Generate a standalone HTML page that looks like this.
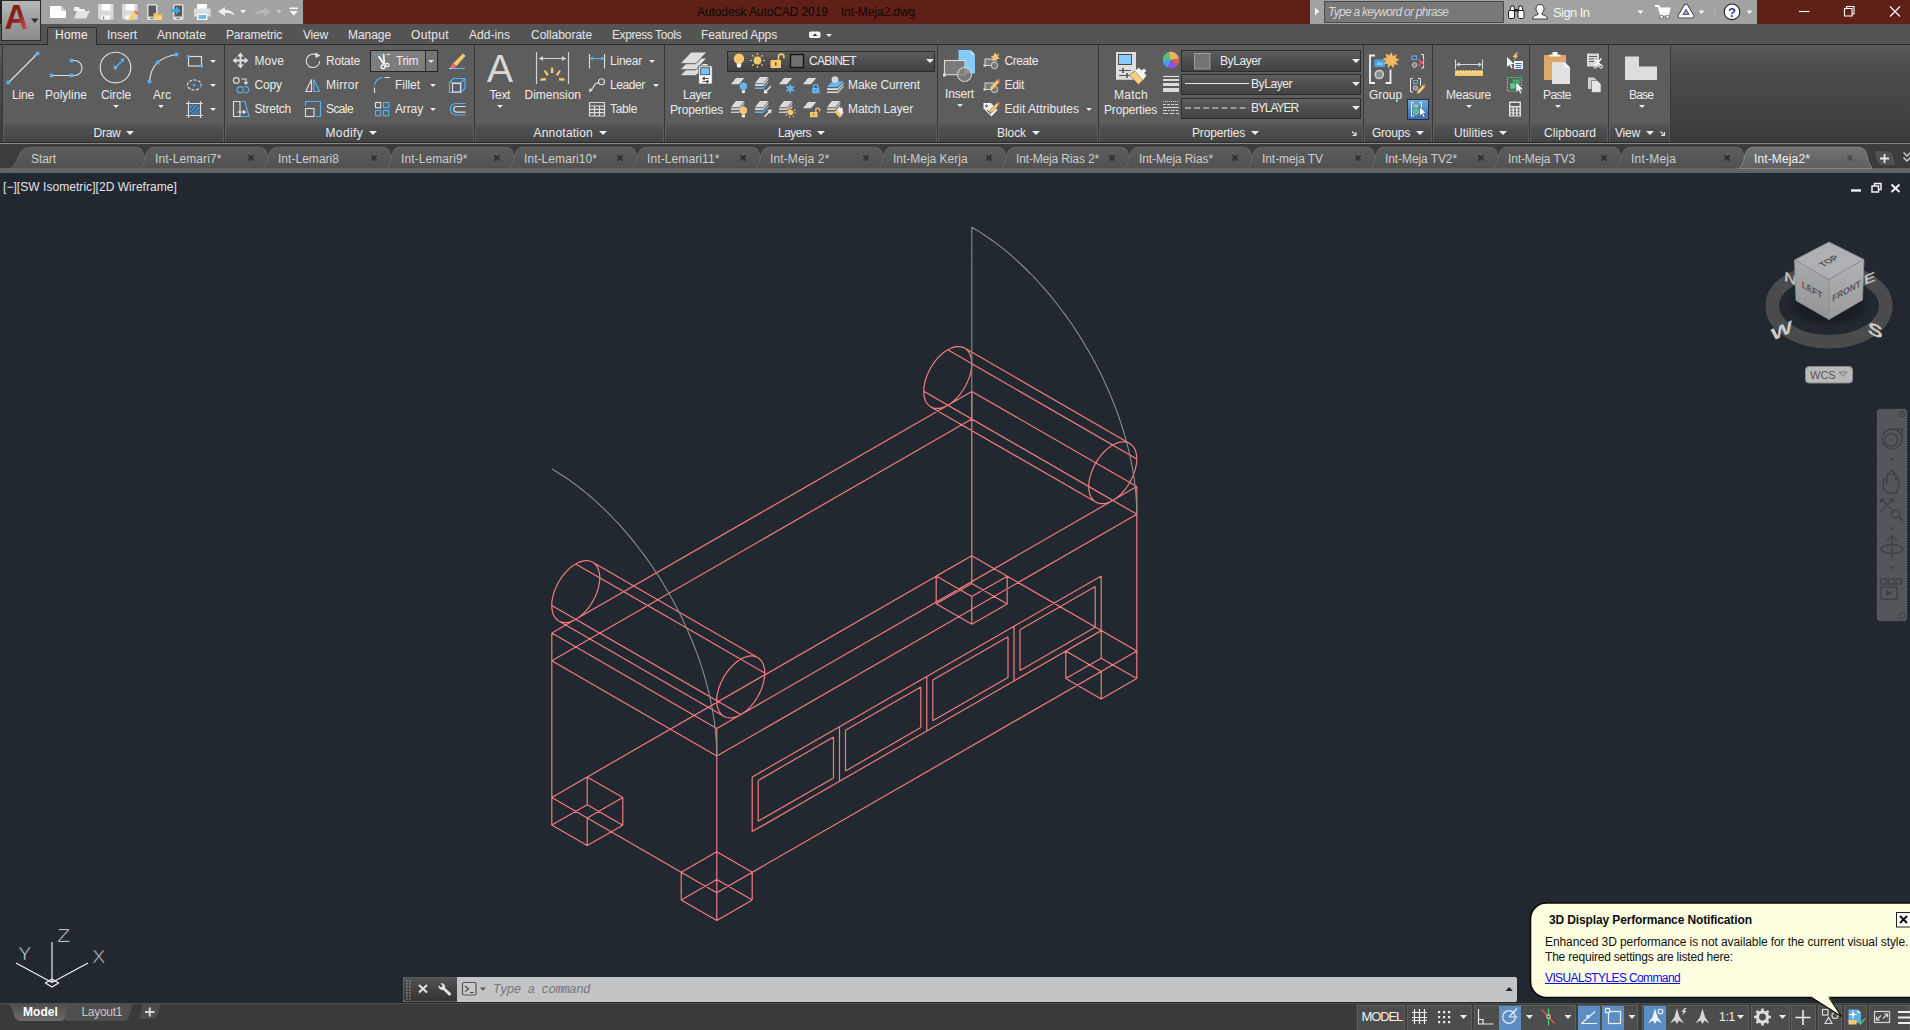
<!DOCTYPE html>
<html lang="en"><head><meta charset="utf-8"><title>Autodesk AutoCAD 2019 - Int-Meja2.dwg</title>
<style>
*{box-sizing:border-box;margin:0;padding:0}
html,body{width:1910px;height:1030px;overflow:hidden;background:#212830;font-family:"Liberation Sans",sans-serif;font-size:12px;color:#ebebeb}
.a{position:absolute}
.t{position:absolute;white-space:nowrap;line-height:14px;height:14px;letter-spacing:-0.15px}
svg{position:absolute;overflow:visible}
#title{left:0;top:0;width:1910px;height:24px;background:#5e2017}
#qat{left:41px;top:0;width:262px;height:24px;background:#a2a2a2}
#appbtn{left:1px;top:0;width:40px;height:41px;border:1px solid #2a2a2a;background:linear-gradient(#b8b8b8,#9c9ea0 50%,#8e8a8a)}
#info{left:1310px;top:0;width:447px;height:24px;background:#a2a2a2}
#tabsrow{left:0;top:24px;width:1910px;height:21px;background:#545454}
#ribbon{left:0;top:44px;width:1910px;height:99px;border-top:1px solid #2c2c2c;border-bottom:1px solid #2a2a2a;background:linear-gradient(#5a5b5d 0,#4d4e50 20%,#454648 55%,#3b3b3b 100%)}
.pt{top:123.500px;height:18px;background:linear-gradient(#585858 0,#4e4f50 25%,#4a4b4c 60%,#434343 100%)}
.lbl{color:#ebebeb}
.dd{position:absolute;width:0;height:0;border-left:4px solid transparent;border-right:4px solid transparent;border-top:4.500px solid #ececec}
.dds{position:absolute;width:0;height:0;border-left:3px solid transparent;border-right:3px solid transparent;border-top:3px solid #e8e8e8}
#filetabs{left:0;top:143px;width:1910px;height:30px;background:#3c3c3c;border-top:1px solid #888}
.ft{position:absolute;top:3px;height:22px;width:128px}
#viewport{left:0;top:173px;width:1910px;height:830px;background:#212830}
#status{left:0;top:1003px;width:1910px;height:27px;background:#3a3a3a}
</style></head><body>
<div class="a" id="title"></div><div class="a" style="left:0;top:0;width:1px;height:42px;background:#1c1c1c"></div>
<div class="a" id="qat"></div>
<div class="a" id="info"></div>
<div class="a" style="left:0;top:24px;width:1910px;height:1px;background:#2b2b2b"></div>
<div class="t" style="left:697.0px;top:5.0px;color:#100706;font-size:12px;line-height:14px;height:14px;letter-spacing:-0.09px;">Autodesk AutoCAD 2019    Int-Meja2.dwg</div>
<div class="a" style="left:1324px;top:1px;width:180px;height:22px;background:#787878;border:1px solid #4a4a4a"></div>
<div class="t" style="left:1328.0px;top:5.0px;color:#d6d6d6;font-size:12px;line-height:14px;height:14px;letter-spacing:-0.74px;font-style:italic;">Type a keyword or phrase</div>
<div class="t" style="left:1553.0px;top:4.8px;color:#eef6f6;font-size:13px;line-height:15px;height:15px;letter-spacing:-0.57px;">Sign In</div>
<svg class="a" style="left:0;top:0" width="1910" height="46" viewBox="0 0 1910 46">
<!-- QAT icons -->
<path d="M50 6h11l5 5v7h-16z" fill="#fff"/><path d="M61 6v5h5z" fill="#d0d0d0"/>
<path d="M74 7h5l1 2h5v2h-11z" fill="#f4f4f4"/><path d="M77 11h13l-4 7.5h-12z" fill="#e4e4e4"/>
<path d="M98 4h15.5v15.5h-14l-1.500-1.500z" fill="#d9d9d9"/><rect x="101.500" y="4" width="9" height="6.500" fill="#fff"/><rect x="101.500" y="15.500" width="8.500" height="4" fill="#fff"/><rect x="103" y="16.500" width="1.200" height="2.500" fill="#777"/>
<path d="M122 4h15.5v15.500h-14l-1.500-1.500z" fill="#d9d9d9"/><rect x="125.500" y="4" width="9" height="6.500" fill="#fff"/><rect x="125.500" y="15.500" width="5" height="4" fill="#fff"/><path d="M129 17.500l6-6.500 3 2.800-6 6.200-3.500 0.500z" fill="#f2cf6a"/><path d="M134 12l1.700-1.800 3 2.800-1.700 1.800z" fill="#ea6a6a"/>
<rect x="147" y="4" width="10.500" height="16" rx="1.500" fill="#dcdcdc"/><rect x="148.500" y="5.500" width="7.500" height="11" fill="#585858"/><rect x="150.500" y="17.800" width="3" height="1" fill="#555"/><path d="M153.500 13h3l1 1.200h4.500v5.800h-8.500z" fill="#f3c04f"/><path d="M153.500 20l1.500-4h7.500l-1 4z" fill="#f7d37c"/>
<rect x="173" y="4" width="10.500" height="16" rx="1.500" fill="#dcdcdc"/><rect x="174.500" y="5.500" width="7.500" height="11" fill="#585858"/><rect x="176.500" y="17.800" width="3" height="1" fill="#555"/><path d="M171 9h5v-2.500l4.500 4-4.500 4v-2.500h-5z" fill="#45a3e8"/>
<path d="M197 4h10v5h-10z" fill="#fff"/><path d="M194 8.500h16.500v8h-16.500z" fill="#dedede"/><path d="M194 12.500h16.500v1h-16.500z" fill="#c9c9c9"/><rect x="197" y="13.500" width="10.500" height="6.500" fill="#fff"/><rect x="198.500" y="15" width="7.500" height="4" fill="#6dbaf0"/>
<path d="M218 11.500l7-4.500v3c5 0 8.500 1.500 9.500 6c-2-2.500-5-3-9.500-3v3z" fill="#ececec"/>
<path d="M240.200 10h6l-3 3.500z" fill="#f2f2f2"/>
<path d="M271 11.500l-7-4.500v3c-5 0-8.500 1.500-9.500 6c2-2.500 5-3 9.500-3v3z" fill="#b9b9b9"/>
<path d="M276 10h6l-3 3.500z" fill="#c4c4c4"/>
<rect x="289.500" y="7.500" width="8.500" height="1.600" fill="#f4f4f4"/><path d="M289.500 11h8.500l-4.250 4.500z" fill="#f4f4f4"/>
<!-- info center -->
<path d="M1315 7.500l4.500 4-4.500 4z" fill="#f2f2f2"/>
<g fill="#fff" stroke="#222" stroke-width="1"><rect x="1508.500" y="10.500" width="6" height="8" rx="1.500"/><rect x="1518" y="10.500" width="6" height="8" rx="1.500"/><path d="M1510 10.500l1-4.500h3l0.500 4.500z"/><path d="M1518.500 10.500l.5-4.500h3l1 4.500z"/></g><rect x="1514" y="9" width="4.500" height="2.500" fill="#222"/>
<g><path d="M1532.500 19c0-3 2.500-3.500 5.500-4.500v-1.500c-1.500-1-2-2.500-2-4.500c0-2.500 1.500-4 4-4s4 1.500 4 4c0 2-.5 3.500-2 4.500v1.500c3 1 5.500 1.500 5.500 4.500z" fill="#f6f6f6" stroke="#333" stroke-width="0.900"/></g>
<path d="M1637.500 10.500h6l-3 3.500z" fill="#f4f4f4"/>
<g fill="none" stroke="#fff" stroke-width="2"><path d="M1655 6h3.500l2.500 8.500h7l1.500-6h-10"/></g><path d="M1660 8.500h9l-1.500 5h-6z" fill="#fff"/><circle cx="1661.500" cy="17" r="1.700" fill="#fff" stroke="#333" stroke-width=".6"/><circle cx="1667.500" cy="17" r="1.700" fill="#fff" stroke="#333" stroke-width=".6"/>
<g><path d="M1686 6l-6 10h12z" fill="none" stroke="#333" stroke-width="4.600" stroke-linejoin="round"/><path d="M1686 6l-6 10h12z" fill="none" stroke="#fff" stroke-width="3" stroke-linejoin="round"/><path d="M1686 9.500l-3 5h6z" fill="#a2a2a2" stroke="#3c49a0" stroke-width=".8"/></g>
<path d="M1698.500 10.500h6l-3 3.500z" fill="#f4f4f4"/>
<path d="M1714.500 4v16" stroke="#b8b8b8" stroke-width="1" stroke-dasharray="1 1"/>
<circle cx="1732" cy="11.800" r="7.800" fill="#fff" stroke="#222" stroke-width="1.100"/>
<text x="1732" y="16.500" font-family="Liberation Sans,sans-serif" font-weight="bold" font-size="13" fill="#2f3a9a" text-anchor="middle">?</text>
<path d="M1746.500 10.500h6l-3 3.500z" fill="#f4f4f4"/>
<!-- window controls -->
<g stroke="#fff" stroke-width="1.100" fill="none"><path d="M1799 11.500h10.500"/><path d="M1844.500 8.500h7.500v7.500h-7.500z"/><path d="M1846.500 8.500v-2h7.500v7.500h-2"/><path d="M1890 6.500l10 10M1900 6.500l-10 10"/></g>
</svg>
<div class="a" id="tabsrow"></div>
<div class="a" id="ribbon"></div>
<div class="a" style="left:47px;top:27px;width:50px;height:18px;background:#5b5b5b;border:1px solid #2e2e2e;border-bottom:none;border-radius:2px 2px 0 0"></div>
<div class="a" id="appbtn"></div>
<svg class="a" style="left:0;top:0" width="42" height="42" viewBox="0 0 42 42"><defs><linearGradient id="alogo" x1="0" y1="0" x2="1" y2="1"><stop offset="0" stop-color="#6a1411"/><stop offset=".55" stop-color="#8e2420"/><stop offset="1" stop-color="#d86a6a"/></linearGradient></defs><text x="16.500" y="29" text-anchor="middle" font-family="Liberation Sans,sans-serif" font-weight="bold" font-size="36" fill="url(#alogo)" transform="translate(16.500 0) scale(.92 1) translate(-16.500 0)">A</text><path d="M31 18.500h7.500l-3.750 4.500z" fill="#2a2a2a"/></svg>
<div class="t" style="left:55.0px;top:28.0px;color:#f2f2f2;font-size:12px;line-height:14px;height:14px;letter-spacing:0.25px;">Home</div>
<div class="t" style="left:107.0px;top:28.0px;color:#e6e6e6;font-size:12px;line-height:14px;height:14px;letter-spacing:-0.00px;">Insert</div>
<div class="t" style="left:157.0px;top:28.0px;color:#e6e6e6;font-size:12px;line-height:14px;height:14px;letter-spacing:0.12px;">Annotate</div>
<div class="t" style="left:226.0px;top:28.0px;color:#e6e6e6;font-size:12px;line-height:14px;height:14px;letter-spacing:-0.20px;">Parametric</div>
<div class="t" style="left:303.0px;top:28.0px;color:#e6e6e6;font-size:12px;line-height:14px;height:14px;letter-spacing:-0.20px;">View</div>
<div class="t" style="left:348.0px;top:28.0px;color:#e6e6e6;font-size:12px;line-height:14px;height:14px;letter-spacing:-0.06px;">Manage</div>
<div class="t" style="left:411.0px;top:28.0px;color:#e6e6e6;font-size:12px;line-height:14px;height:14px;letter-spacing:0.33px;">Output</div>
<div class="t" style="left:469.0px;top:28.0px;color:#e6e6e6;font-size:12px;line-height:14px;height:14px;letter-spacing:0.04px;">Add-ins</div>
<div class="t" style="left:531.0px;top:28.0px;color:#e6e6e6;font-size:12px;line-height:14px;height:14px;letter-spacing:-0.03px;">Collaborate</div>
<div class="t" style="left:612.0px;top:28.0px;color:#e6e6e6;font-size:12px;line-height:14px;height:14px;letter-spacing:-0.42px;">Express Tools</div>
<div class="t" style="left:701.0px;top:28.0px;color:#e6e6e6;font-size:12px;line-height:14px;height:14px;letter-spacing:-0.16px;">Featured Apps</div>
<div class="a" style="left:2px;top:45px;width:1669px;height:97px;background:#5d5d5d"></div>
<div class="a pt" style="left:4px;width:219px"></div>
<div class="t" style="left:93.5px;top:125.6px;color:#ebebeb;font-size:12px;line-height:14px;height:14px;letter-spacing:-0.25px;">Draw</div>
<div class="dd" style="left:126.0px;top:130.800px"></div>
<div class="a pt" style="left:226px;width:247px"></div>
<div class="t" style="left:325.5px;top:125.6px;color:#ebebeb;font-size:12px;line-height:14px;height:14px;letter-spacing:0.36px;">Modify</div>
<div class="dd" style="left:369.0px;top:130.800px"></div>
<div class="a pt" style="left:476px;width:187px"></div>
<div class="t" style="left:533.5px;top:125.6px;color:#ebebeb;font-size:12px;line-height:14px;height:14px;letter-spacing:0.21px;">Annotation</div>
<div class="dd" style="left:599.0px;top:130.800px"></div>
<div class="a pt" style="left:666px;width:270px"></div>
<div class="t" style="left:778.0px;top:125.6px;color:#ebebeb;font-size:12px;line-height:14px;height:14px;letter-spacing:-0.51px;">Layers</div>
<div class="dd" style="left:817.0px;top:130.800px"></div>
<div class="a pt" style="left:939px;width:158px"></div>
<div class="t" style="left:997.0px;top:125.6px;color:#ebebeb;font-size:12px;line-height:14px;height:14px;letter-spacing:-0.07px;">Block</div>
<div class="dd" style="left:1032.0px;top:130.800px"></div>
<div class="a pt" style="left:1100px;width:262px"></div>
<div class="t" style="left:1192.0px;top:125.6px;color:#ebebeb;font-size:12px;line-height:14px;height:14px;letter-spacing:-0.17px;">Properties</div>
<div class="dd" style="left:1251.0px;top:130.800px"></div>
<div class="a pt" style="left:1365px;width:66px"></div>
<div class="t" style="left:1372.0px;top:125.6px;color:#ebebeb;font-size:12px;line-height:14px;height:14px;letter-spacing:-0.23px;">Groups</div>
<div class="dd" style="left:1416.0px;top:130.800px"></div>
<div class="a pt" style="left:1434px;width:94px"></div>
<div class="t" style="left:1454.0px;top:125.6px;color:#ebebeb;font-size:12px;line-height:14px;height:14px;letter-spacing:0.04px;">Utilities</div>
<div class="dd" style="left:1499.0px;top:130.800px"></div>
<div class="a pt" style="left:1531px;width:76px"></div>
<div class="t" style="left:1544.0px;top:125.6px;color:#ebebeb;font-size:12px;line-height:14px;height:14px;letter-spacing:0.07px;">Clipboard</div>
<div class="a pt" style="left:1610px;width:59px"></div>
<div class="t" style="left:1615.0px;top:125.6px;color:#ebebeb;font-size:12px;line-height:14px;height:14px;letter-spacing:-0.20px;">View</div>
<div class="dd" style="left:1645.5px;top:130.800px"></div>
<div class="a" style="left:2px;top:45px;width:1px;height:97px;background:#38383b"></div>
<div class="a" style="left:224px;top:45px;width:1px;height:97px;background:#38383b"></div>
<div class="a" style="left:474px;top:45px;width:1px;height:97px;background:#38383b"></div>
<div class="a" style="left:664px;top:45px;width:1px;height:97px;background:#38383b"></div>
<div class="a" style="left:937px;top:45px;width:1px;height:97px;background:#38383b"></div>
<div class="a" style="left:1098px;top:45px;width:1px;height:97px;background:#38383b"></div>
<div class="a" style="left:1363px;top:45px;width:1px;height:97px;background:#38383b"></div>
<div class="a" style="left:1432px;top:45px;width:1px;height:97px;background:#38383b"></div>
<div class="a" style="left:1529px;top:45px;width:1px;height:97px;background:#38383b"></div>
<div class="a" style="left:1608px;top:45px;width:1px;height:97px;background:#38383b"></div>
<div class="a" style="left:1670px;top:45px;width:1px;height:97px;background:#38383b"></div>
<div class="a" style="left:727px;top:50.5px;width:208px;height:21px;border:1px solid #2c2c2c;background:linear-gradient(#5e5e5e,#4e4e4e 50%,#424242)"></div>
<div class="a" style="left:1181px;top:50px;width:180px;height:21.5px;border:1px solid #2c2c2c;background:linear-gradient(#5e5e5e,#4e4e4e 50%,#424242)"></div>
<div class="a" style="left:1181px;top:73.5px;width:180px;height:21px;border:1px solid #2c2c2c;background:linear-gradient(#5e5e5e,#4e4e4e 50%,#424242)"></div>
<div class="a" style="left:1181px;top:97.5px;width:180px;height:21.5px;border:1px solid #2c2c2c;background:linear-gradient(#5e5e5e,#4e4e4e 50%,#424242)"></div>
<div class="t" style="left:1220.0px;top:53.8px;color:#ebebeb;font-size:12px;line-height:14px;height:14px;letter-spacing:-0.43px;">ByLayer</div>
<div class="t" style="left:1251.0px;top:77.0px;color:#ebebeb;font-size:12px;line-height:14px;height:14px;letter-spacing:-0.43px;">ByLayer</div>
<div class="t" style="left:1251.0px;top:101.0px;color:#ebebeb;font-size:12px;line-height:14px;height:14px;letter-spacing:-1.07px;">BYLAYER</div>
<div class="a" style="left:370px;top:50px;width:68px;height:22px;border:1px solid #262626;background:#7d7d7d"></div><div class="a" style="left:425px;top:51px;width:1px;height:20px;background:#2a2a2a"></div><div class="a" style="left:426px;top:51px;width:11px;height:20px;background:#747474"></div>
<div class="a" style="left:1407px;top:99px;width:22px;height:21px;background:linear-gradient(#6fa6dc,#3d6db8);border:1px solid #20324f"></div>
<div class="t" style="left:12.0px;top:87.5px;color:#ebebeb;font-size:12px;line-height:14px;height:14px;letter-spacing:-0.17px;">Line</div>
<div class="t" style="left:45.0px;top:87.5px;color:#ebebeb;font-size:12px;line-height:14px;height:14px;letter-spacing:-0.00px;">Polyline</div>
<div class="t" style="left:101.0px;top:87.5px;color:#ebebeb;font-size:12px;line-height:14px;height:14px;letter-spacing:-0.11px;">Circle</div>
<div class="t" style="left:153.0px;top:87.5px;color:#ebebeb;font-size:12px;line-height:14px;height:14px;letter-spacing:0.00px;">Arc</div>
<div class="t" style="left:254.5px;top:53.8px;color:#ebebeb;font-size:12px;line-height:14px;height:14px;letter-spacing:0.04px;">Move</div>
<div class="t" style="left:254.5px;top:78.0px;color:#ebebeb;font-size:12px;line-height:14px;height:14px;letter-spacing:-0.13px;">Copy</div>
<div class="t" style="left:254.5px;top:102.0px;color:#ebebeb;font-size:12px;line-height:14px;height:14px;letter-spacing:-0.22px;">Stretch</div>
<div class="t" style="left:326.0px;top:53.8px;color:#ebebeb;font-size:12px;line-height:14px;height:14px;letter-spacing:-0.23px;">Rotate</div>
<div class="t" style="left:326.0px;top:78.0px;color:#ebebeb;font-size:12px;line-height:14px;height:14px;letter-spacing:0.28px;">Mirror</div>
<div class="t" style="left:326.0px;top:102.0px;color:#ebebeb;font-size:12px;line-height:14px;height:14px;letter-spacing:-0.61px;">Scale</div>
<div class="t" style="left:396.0px;top:53.8px;color:#ebebeb;font-size:12px;line-height:14px;height:14px;letter-spacing:-0.39px;">Trim</div>
<div class="t" style="left:395.0px;top:78.0px;color:#ebebeb;font-size:12px;line-height:14px;height:14px;letter-spacing:-0.06px;">Fillet</div>
<div class="t" style="left:395.0px;top:102.0px;color:#ebebeb;font-size:12px;line-height:14px;height:14px;letter-spacing:-0.13px;">Array</div>
<div class="t" style="left:489.5px;top:87.5px;color:#ebebeb;font-size:12px;line-height:14px;height:14px;letter-spacing:-0.38px;">Text</div>
<div class="t" style="left:524.5px;top:87.5px;color:#ebebeb;font-size:12px;line-height:14px;height:14px;letter-spacing:-0.02px;">Dimension</div>
<div class="t" style="left:610.0px;top:53.8px;color:#ebebeb;font-size:12px;line-height:14px;height:14px;letter-spacing:-0.23px;">Linear</div>
<div class="t" style="left:610.0px;top:78.0px;color:#ebebeb;font-size:12px;line-height:14px;height:14px;letter-spacing:-0.40px;">Leader</div>
<div class="t" style="left:610.0px;top:102.0px;color:#ebebeb;font-size:12px;line-height:14px;height:14px;letter-spacing:-0.34px;">Table</div>
<div class="t" style="left:683.0px;top:87.5px;color:#ebebeb;font-size:12px;line-height:14px;height:14px;letter-spacing:-0.41px;">Layer</div>
<div class="t" style="left:670.0px;top:102.5px;color:#ebebeb;font-size:12px;line-height:14px;height:14px;letter-spacing:-0.17px;">Properties</div>
<div class="t" style="left:809.0px;top:53.8px;color:#ebebeb;font-size:12px;line-height:14px;height:14px;letter-spacing:-0.72px;">CABINET</div>
<div class="t" style="left:848.0px;top:78.0px;color:#ebebeb;font-size:12px;line-height:14px;height:14px;letter-spacing:-0.06px;">Make Current</div>
<div class="t" style="left:848.0px;top:102.0px;color:#ebebeb;font-size:12px;line-height:14px;height:14px;letter-spacing:-0.09px;">Match Layer</div>
<div class="t" style="left:945.0px;top:87.0px;color:#ebebeb;font-size:12px;line-height:14px;height:14px;letter-spacing:-0.17px;">Insert</div>
<div class="t" style="left:1004.5px;top:53.8px;color:#ebebeb;font-size:12px;line-height:14px;height:14px;letter-spacing:-0.42px;">Create</div>
<div class="t" style="left:1004.5px;top:78.0px;color:#ebebeb;font-size:12px;line-height:14px;height:14px;letter-spacing:-0.30px;">Edit</div>
<div class="t" style="left:1004.5px;top:102.0px;color:#ebebeb;font-size:12px;line-height:14px;height:14px;letter-spacing:0.03px;">Edit Attributes</div>
<div class="t" style="left:1114.0px;top:87.5px;color:#ebebeb;font-size:12px;line-height:14px;height:14px;letter-spacing:0.26px;">Match</div>
<div class="t" style="left:1104.0px;top:102.5px;color:#ebebeb;font-size:12px;line-height:14px;height:14px;letter-spacing:-0.17px;">Properties</div>
<div class="t" style="left:1369.0px;top:87.5px;color:#ebebeb;font-size:12px;line-height:14px;height:14px;letter-spacing:-0.07px;">Group</div>
<div class="t" style="left:1446.0px;top:87.5px;color:#ebebeb;font-size:12px;line-height:14px;height:14px;letter-spacing:-0.24px;">Measure</div>
<div class="t" style="left:1543.0px;top:87.5px;color:#ebebeb;font-size:12px;line-height:14px;height:14px;letter-spacing:-0.54px;">Paste</div>
<div class="t" style="left:1629.0px;top:87.5px;color:#ebebeb;font-size:12px;line-height:14px;height:14px;letter-spacing:-0.84px;">Base</div>
<div class="dds" style="left:112.5px;top:104.5px"></div>
<div class="dds" style="left:158.0px;top:104.5px"></div>
<div class="dds" style="left:496.5px;top:104.5px"></div>
<div class="dds" style="left:956.5px;top:104.0px"></div>
<div class="dds" style="left:1465.5px;top:105.0px"></div>
<div class="dds" style="left:1554.5px;top:105.0px"></div>
<div class="dds" style="left:1638.5px;top:105.0px"></div>
<div class="dds" style="left:209.5px;top:59.5px"></div>
<div class="dds" style="left:209.5px;top:83.5px"></div>
<div class="dds" style="left:209.5px;top:107.5px"></div>
<div class="dds" style="left:428.0px;top:59.5px"></div>
<div class="dds" style="left:430.0px;top:83.5px"></div>
<div class="dds" style="left:430.0px;top:107.5px"></div>
<div class="dds" style="left:649.0px;top:59.5px"></div>
<div class="dds" style="left:652.5px;top:83.5px"></div>
<div class="dds" style="left:1086.0px;top:107.5px"></div>
<div class="dds" style="left:826.0px;top:33.5px"></div>
<div class="dd" style="left:925.5px;top:59.0px"></div>
<div class="dd" style="left:1351.5px;top:59.0px"></div>
<div class="dd" style="left:1351.5px;top:82.0px"></div>
<div class="dd" style="left:1351.5px;top:106.0px"></div>
<svg class="a" style="left:0;top:0" width="1910" height="146" viewBox="0 0 1910 146">

<g fill="none" stroke="#dedede" stroke-width="1.150">
<!-- Draw -->
<path d="M8.500 82.500L37.500 53.500"/>
<path d="M51.500 75.500H74.500A7.500 7.500 0 0 0 74.500 60.500H72"/>
<circle cx="115.500" cy="67.500" r="15.300"/>
<path d="M149.500 81.500C150.500 66 160 57 176.500 54.500"/>
<rect x="188.500" y="56.500" width="13" height="9.500"/>
<path d="M200.500 82.500A7 5 0 1 0 200.500 87.500" stroke-dasharray="3 1.500"/>
<path d="M186 103.500h17M186 115.500h17M188.500 101v17M200.500 101v17"/>
<!-- Modify -->
<path d="M235 60.500H246M240.500 55V66" stroke-width="1.900"/>
<circle cx="236.300" cy="80.500" r="2.900"/>
<path d="M241.500 79h4.500v3.500"/>
<path d="M233.500 101.500h6.500v15h-6.500z"/>
<path d="M237.500 112h7"/>
<path d="M317.200 55.600A6.700 6.700 0 1 0 319.700 61"/>
<path d="M311.500 79.500L305.800 91.500H311.500z"/>
<rect x="305.500" y="108.500" width="8.500" height="8"/>
<path d="M384.500 77.500h5.500M374.500 87.500v5.500"/>
<rect x="375.500" y="102.500" width="5.200" height="5.200"/>
<path d="M386.500 54.500h3.800"/>
<!-- Annotation -->
<path d="M536.500 52v32M568.500 52v32M539 58.500h27" stroke="#d4d4d4"/>
<path d="M589.500 54v14.500M604.500 54v14.500"/>
<circle cx="601.500" cy="81.700" r="3"/>
<path d="M598.500 82.500l-3 1.200l-5 7.500"/>
<path d="M589.500 102.500h15v13.500h-15zM589.500 106h15M589.500 109.300h15M589.500 112.600h15M594.500 106v10M599.500 106v10"/>
</g>
<!-- arrowheads etc (filled light) -->
<g fill="#dedede">
<path d="M232.500 60.500l4-3.300v6.600zM248.500 60.500l-4-3.300v6.600zM240.500 52.500l-3.300 4h6.600zM240.500 68.500l-3.300-4h6.600z"/>
<path d="M246 85l-2.500-3h5z"/>
<path d="M246.500 112l-3.500-2.600v5.200z"/>
<path d="M320.500 55.500l-5.500-3.300l.7 5.800z"/>
<path d="M539 58.500l4-2.500v5zM566 58.500l-4-2.500v5z" fill="#d4d4d4"/>
<path d="M588.800 92.500l1-4.500l3 2.300z"/>
</g>
<!-- blue parts -->
<g fill="none" stroke="#55b1f2" stroke-width="1.150">
<path d="M116 67l7.500-7.500"/>
<circle cx="240.200" cy="89.700" r="3.100"/><path d="M244.300 87a3.100 3.100 0 1 1 0 5.400"/>
<path d="M241.500 101.500h3.500l4 15h-8.500"/>
<path d="M313.800 79.500L319.500 91.500H313.800z"/>
<path d="M305.500 106v-4.500h15v15h-4.500"/>
<path d="M374 54.500h8" stroke-dasharray="2 1"/>
<path d="M374.500 85.500A8.500 8.500 0 0 1 382.500 77.500"/>
<rect x="383.500" y="102.500" width="5.200" height="5.200"/><rect x="375.500" y="110.500" width="5.200" height="5.200"/><rect x="383.500" y="110.500" width="5.200" height="5.200"/>
<path d="M452 68.500h13"/>
<path d="M449.500 82.500l4-4h11.500v9.500l-4 4.500M465 78.500l-4 4M449.500 82.500h11.500v10h-11.500z"/>
<path d="M465.500 103.500h-9.500a5.700 5.700 0 0 0 0 11.500h9.500"/>
<path d="M591 58.500h12"/>
</g>
<path d="M124.500 58l-4.500 1.200l3.300 3.300z" fill="#55b1f2"/>
<path d="M589.800 58.500l3-2v4zM604.200 58.500l-3-2v4z" fill="#55b1f2"/>
<g stroke="#dedede" stroke-width="1.150" fill="none"><rect x="452.500" y="83.500" width="8" height="8.500"/><path d="M465.500 106.500h-9a2.800 2.800 0 0 0 0 5.600h9"/></g>
<!-- hatch fill -->
<rect x="189.500" y="104.500" width="10" height="10" fill="#3a6890"/><path d="M190 112l7-7M192 114.500l7.500-7.500M190 108l3.500-3.500M196 114.500l3.500-3.500" stroke="#62aee6" stroke-width=".9"/>
<!-- blue grips -->
<rect x="6.7" y="80.7" width="3.600" height="3.600" fill="#55b1f2"/><rect x="35.7" y="51.7" width="3.600" height="3.600" fill="#55b1f2"/>
<rect x="49.7" y="73.7" width="3.600" height="3.600" fill="#55b1f2"/><rect x="69.7" y="73.7" width="3.600" height="3.600" fill="#55b1f2"/><rect x="69.7" y="58.7" width="3.600" height="3.600" fill="#55b1f2"/>
<rect x="113.7" y="65.7" width="3.600" height="3.600" fill="#55b1f2"/>
<rect x="147.7" y="79.7" width="3.600" height="3.600" fill="#55b1f2"/><rect x="155.7" y="60.7" width="3.600" height="3.600" fill="#55b1f2"/><rect x="174.7" y="52.7" width="3.600" height="3.600" fill="#55b1f2"/>
<rect x="187.200" y="55.200" width="2.500" height="2.500" fill="#55b1f2"/><rect x="200.500" y="65" width="2.500" height="2.500" fill="#55b1f2"/>
<rect x="193" y="84" width="2.200" height="2.200" fill="#55b1f2"/><rect x="193" y="78.800" width="2.200" height="2.200" fill="#55b1f2"/><rect x="200" y="84" width="2.200" height="2.200" fill="#55b1f2"/>
<!-- trim scissors -->
<path d="M377.800 56.500l2-.8l4.800 7.800l-1.500 1.200z" fill="#f6f6f6"/><path d="M382.800 53.800h1.600l.8 9l-1.800 1z" fill="#f6f6f6"/>
<g stroke="#f6f6f6" stroke-width="1.300" fill="none"><circle cx="383" cy="66.700" r="1.900"/><circle cx="387.300" cy="65" r="1.700"/><path d="M384.500 63.500l2 .5"/></g>
<!-- erase -->
<path d="M463 53.500l2.500 2.500l-9 10l-3.500-2.500z" fill="#f6c76e"/><path d="M453 63.500l3.500 2.500l-2 2.200l-3.300-.2l-.5-2z" fill="#ee6b6b"/><path d="M449 68.500h3" stroke="#dedede"/>
<!-- big A and dimension burst -->
<text x="500" y="82" font-family="Liberation Sans,sans-serif" font-size="39.500" fill="#d8d8d8" text-anchor="middle">A</text>
<g fill="#f6c76e"><path d="M551.200 67.500h1.800l.5 5.500h-2.800z"/><path d="M543.800 71l1.400-1l3.600 4.500l-2 1.400z"/><path d="M560.800 71l-1.400-1l-3.600 4.500l2 1.400z"/><path d="M540.500 78.500l5.500-.5v2.400l-5.500.3z"/><path d="M564.500 78.500l-5.500-.5v2.400l5.500.3z"/></g>
<!-- Layer properties big -->
<g stroke="#5d5d5d" stroke-width="1"><path d="M691.200 64h15.800l-11.100 11.800h-16z" fill="#dcdcdc"/><path d="M691.200 58h15.800l-11.100 11.800h-16z" fill="#dcdcdc"/><path d="M691.200 52h15.800l-11.100 11.700h-16z" fill="#dedede"/></g>
<rect x="703" y="64" width="4.500" height="2" fill="#f4f4f4"/>
<rect x="698.700" y="65.900" width="13.500" height="18.100" fill="#f8f8f8" stroke="#5d5d5d" stroke-width=".8"/>
<rect x="700.700" y="67.700" width="9" height="7" fill="#76c3f7" stroke="#4a4a4a" stroke-width=".9"/>
<path d="M702.800 78.500h6M702.500 78.500l1.800-1.500v3zM702.500 81.500h6M708.800 81.500l-1.800-1.500v3z" stroke="#555" stroke-width="1" fill="#555"/>
<!-- layer combo icons -->
<circle cx="739" cy="58.800" r="5.200" fill="#f6c76e"/><path d="M736.800 63.500h4.400v2.500a2.200 1.800 0 0 1-4.400 0z" fill="#f4f4f4"/>
<circle cx="757.500" cy="60.500" r="3.900" fill="#f6c76e"/><g stroke="#f6c76e" stroke-width="1.200"><path d="M757.500 53v2M757.500 66v2M750 60.500h2M763 60.500h2M752.200 55.200l1.400 1.400M761.400 64.400l1.400 1.400M752.200 65.800l1.400-1.400M761.400 56.600l1.400-1.400"/></g>
<rect x="770.500" y="60" width="10.500" height="8" fill="#f6c76e"/><path d="M778.500 60v-3.200a2.700 2.700 0 0 1 5.400 0v1.700" fill="none" stroke="#f6c76e" stroke-width="1.600"/><rect x="775" y="62.500" width="1.500" height="3" fill="#5d4a1e"/>
<rect x="790.500" y="54.500" width="13" height="13" fill="#707070" stroke="#141414" stroke-width="1.400"/>
<!-- layer rows -->
<path d="M736.0 78.0h8.300l-5.300 6.200h-8z" fill="#dcdcdc"/><circle cx="743.400" cy="86.300" r="3.700" fill="#62b8f4"/><path d="M741.800 90.300h3.200v1.700a1.600 1.300 0 0 1-3.200 0z" fill="#f2f2f2"/>
<path d="M760.0 77.0h8.300l-5.300 6.200h-8z" fill="#dcdcdc"/><path d="M755.0 84.2h8l5.300-6.200v1.700l-5.300 6.200h-8z" fill="#e2e2e2"/><path d="M755.0 87.4h8l5.300-6.200v1.700l-5.300 6.200h-8z" fill="#62b8f4"/><path d="M770.800 86.200l-5.300 5.600" stroke="#ececec" stroke-width="1.300"/><path d="M763.800 93.500l.5-4.300l3.800 3.700z" fill="#ececec"/>
<path d="M784.0 78.0h8.300l-5.300 6.200h-8z" fill="#dcdcdc"/><g stroke="#62b8f4" stroke-width="1.300"><path d="M790.300 84v9.400M786.200 86.400l8.200 4.700M786.200 91.100l8.200-4.700"/></g><circle cx="790.300" cy="88.700" r="2.300" fill="none" stroke="#62b8f4" stroke-width="1"/>
<path d="M808.0 78.0h8.300l-5.300 6.200h-8z" fill="#dcdcdc"/><rect x="812.200" y="88" width="7.200" height="5.300" fill="#62b8f4"/><path d="M813.700 88v-1.600a2.100 2.100 0 0 1 4.200 0v1.600" fill="none" stroke="#62b8f4" stroke-width="1.300"/><rect x="815.300" y="89.700" width="1" height="2" fill="#3a6c96"/>
<circle cx="835" cy="79.800" r="3.300" fill="#d2d2d2"/><path d="M832.500 81.200h11l-5.500 5.800h-11z" fill="#62b8f4"/><path d="M835 78.500a3.300 3.300 0 0 0 0 0z" fill="none"/><circle cx="835" cy="79.800" r="3.300" fill="#d2d2d2"/><path d="M827 88.200h11l5.500-5.800v1.700l-5.500 5.800h-11z" fill="#e2e2e2"/><path d="M827 91.400h11l5.500-5.800v1.700l-5.500 5.800h-11z" fill="#dadada"/>
<path d="M736.0 101.0h8.300l-5.300 6.200h-8z" fill="#dcdcdc"/><path d="M731.0 108.2h8l5.300-6.200v1.700l-5.300 6.200h-8z" fill="#d2d2d2"/><path d="M731.0 111.4h8l5.300-6.200v1.700l-5.300 6.200h-8z" fill="#c8c8c8"/><circle cx="743.400" cy="110.500" r="3.700" fill="#f6c76e"/><path d="M741.800 114.600h3.200v1.700a1.600 1.300 0 0 1-3.200 0z" fill="#f2f2f2"/>
<path d="M760.0 101.0h8.300l-5.300 6.200h-8z" fill="#dcdcdc"/><path d="M755.0 108.2h8l5.300-6.200v1.700l-5.300 6.200h-8z" fill="#e2e2e2"/><path d="M755.0 111.4h8l5.300-6.200v1.700l-5.300 6.200h-8z" fill="#62b8f4"/><path d="M764.500 116.800l5.300-5.600" stroke="#ececec" stroke-width="1.300"/><path d="M771.500 109.500l-.5 4.300l-3.800-3.700z" fill="#ececec"/>
<path d="M784.0 101.0h8.300l-5.300 6.200h-8z" fill="#dcdcdc"/><path d="M779.0 108.2h8l5.300-6.200v1.700l-5.300 6.200h-8z" fill="#d2d2d2"/><path d="M779.0 111.4h8l5.300-6.200v1.700l-5.300 6.200h-8z" fill="#c8c8c8"/><circle cx="790.500" cy="112.500" r="2.800" fill="#f6c76e"/><circle cx="790.500" cy="112.500" r="4.700" fill="none" stroke="#f6c76e" stroke-width="1.300" stroke-dasharray="1.300 2.390"/>
<path d="M808.0 102.0h8.300l-5.300 6.200h-8z" fill="#dcdcdc"/><rect x="810" y="112" width="7.500" height="5.200" fill="#f6c76e"/><path d="M815.800 112v-2a1.900 1.900 0 0 1 3.800 0v1.200" fill="none" stroke="#f6c76e" stroke-width="1.300"/><rect x="813.300" y="113.600" width="1" height="2" fill="#6a5320"/>
<path d="M832.0 101.0h8.300l-5.300 6.200h-8z" fill="#dcdcdc"/><path d="M827.0 108.2h8l5.300-6.200v1.700l-5.300 6.200h-8z" fill="#d2d2d2"/><path d="M827.0 111.4h8l5.300-6.200v1.700l-5.300 6.200h-8z" fill="#c8c8c8"/><path d="M834.500 112l2.800-2.500l5.200 5.800l-2.800 2.500z" fill="#f6c76e"/><path d="M837.300 109.500l2.500-2.300l1 1l1-.8l1.200 1.300l-.9.900l1.200 1.200l-.9.900l1.200 1.200l-2.400 2.200z" fill="#f2f2f2"/>
<!-- Block: Insert -->
<path d="M958.500 50h12l4.500 4.500v19h-16.500z" fill="#84ccf8"/><path d="M970.500 50v4.500h4.500z" fill="#b8e6e6"/>
<rect x="944.500" y="60.500" width="20.500" height="14.200" fill="#7a7a7a" stroke="#d8d8d8" stroke-width="1.100"/><rect x="943" y="73.500" width="3" height="3" fill="#dcdcdc"/>
<circle cx="964.500" cy="74.500" r="7" fill="#828282" fill-opacity=".75" stroke="#cfcfcf" stroke-width="1.100"/>
<!-- Create / Edit / Edit attr -->
<g><rect x="985" y="59" width="9" height="6.500" fill="#7a7a7a" stroke="#d8d8d8"/><rect x="983.500" y="64.500" width="2.200" height="2.200" fill="#dcdcdc"/><circle cx="994.500" cy="65.500" r="3.200" fill="#777" stroke="#cfcfcf"/><path d="M995 52l1.200 2.800l3-.8l-1.500 2.700l2.300 2l-3 .3l-.5 3l-1.800-2.500l-2.700 1.300l1-2.900l-2.500-1.700l3-.5z" fill="#f6c76e"/></g>
<g><rect x="985" y="83" width="9" height="6.500" fill="#7a7a7a" stroke="#d8d8d8"/><rect x="983.500" y="88.500" width="2.200" height="2.200" fill="#dcdcdc"/><circle cx="994.500" cy="89.500" r="3.200" fill="#777" stroke="#cfcfcf"/><path d="M990.500 87l6.500-7l2.300 2.200l-6.500 7l-2.800.6z" fill="#f6c76e"/><path d="M997 80l1.300-1.400l2.300 2.200l-1.300 1.400z" fill="#ee6b6b"/></g>
<g><path d="M983.500 103h7.500l6.500 7l-6 6.500l-8-8z" fill="#f0f0f0"/><circle cx="986.500" cy="106" r="1.200" fill="#555"/><path d="M987 110l4 4" stroke="#555"/><path d="M990 110l6.500-7l2.300 2.200l-6.500 7l-2.800.6z" fill="#f6c76e" stroke="#5d5d5d" stroke-width=".5"/><path d="M996.500 103l1.300-1.400l2.300 2.200l-1.300 1.400z" fill="#ee6b6b"/></g>
<!-- Match properties -->
<rect x="1116" y="52" width="20" height="27.800" fill="#dedede"/><rect x="1118.500" y="54.500" width="13" height="10" fill="#86cbf8" stroke="#4c4c4c" stroke-width="1"/><path d="M1119 70.500h12M1119 75.500h12" stroke="#555" stroke-width="1"/><path d="M1123 68v5M1127 73v5" stroke="#555" stroke-width="1.600"/>
<path d="M1129.500 75.300l5.500-4.500l8 9.200l-4.500 4.500z" fill="#f9cf7c" stroke="#5d5d5d" stroke-width=".6"/><path d="M1135 70.800l3.800-3l3 2.800l2.200-2.200l2.300 2.300l-2.200 2.200l2.400 2.600l-3.500 4.500z" fill="#f6f6f6"/>
<!-- color wheel -->
<g><path d="M1171 60L1162.80 60.00A8.2 8.2 0 0 1 1168.20 52.29z" fill="#4fc27a"/><path d="M1171 60L1168.20 52.29A8.2 8.2 0 0 1 1179.08 58.58z" fill="#ebb457"/><path d="M1171 60L1179.08 58.58A8.2 8.2 0 0 1 1176.27 66.28z" fill="#d55f57"/><path d="M1171 60L1176.27 66.28A8.2 8.2 0 0 1 1167.53 67.43z" fill="#8a4ff0"/><path d="M1171 60L1167.53 67.43A8.2 8.2 0 0 1 1162.80 60.00z" fill="#4aa0e8"/></g>
<path d="M1163 76.500h16" stroke="#dcdcdc" stroke-width="1.200"/><path d="M1163 80h16" stroke="#dcdcdc" stroke-width="2"/><path d="M1163 84.500h16" stroke="#dcdcdc" stroke-width="3"/><path d="M1163 90h16" stroke="#dcdcdc" stroke-width="4"/>
<g stroke="#d4d4d4" stroke-width="1.100"><path d="M1163 101.500h16" stroke-dasharray="1 1"/><path d="M1163 104.500h16" stroke-dasharray="3 1"/><path d="M1163 107.500h16"/><path d="M1163 110.500h16" stroke-dasharray="4 1 2 1"/><path d="M1163 113.500h16" stroke-dasharray="5 1.500"/></g>
<path d="M1185 83.500h64" stroke="#e4e4e4" stroke-width="1.100"/><path d="M1185 108h64" stroke="#e4e4e4" stroke-width="1.100" stroke-dasharray="6 3.100"/>
<rect x="1194.500" y="53.500" width="15.500" height="15.500" fill="#737373" stroke="#9a9a9a" stroke-width="1"/>
<path d="M1352 131.500l4 4m0-3.500v3.500h-3.500" stroke="#dedede" fill="none" stroke-width="1.100"/>
<path d="M1660.500 131.500l4 4m0-3.500v3.500h-3.500" stroke="#dedede" fill="none" stroke-width="1.100"/>
<!-- Groups -->
<path d="M1375 55.500h-5v27.500h5M1385.500 83h5v-13.500" stroke="#f0f0f0" stroke-width="1.800" fill="none"/>
<rect x="1374.500" y="59.500" width="10.500" height="7.500" rx="1.200" fill="#4aa3e8"/><path d="M1377 62.500h5.500v2.500h-5.500z" fill="#8fc9f5"/><circle cx="1379.300" cy="74.500" r="4" fill="#8e8e8e" stroke="#cdcdcd" stroke-width="1.600"/>
<path d="M1391.400 52.200l1.700 4l3.800-2.100l-1.300 4.200l4.200 1.100l-3.900 2l2.400 3.600l-4.200-.8l-.6 4.300l-2.600-3.500l-3 3.200l-.2-4.400l-4.300.5l2.700-3.400l-3.700-2.300l4.200-.9l-1-4.200l3.800 2.100z" fill="#f4b860"/>
<g><rect x="1412" y="56" width="4.500" height="3.500" fill="none" stroke="#55b1f2"/><circle cx="1414.500" cy="65" r="2.300" fill="#888" stroke="#c4c4c4"/><path d="M1421 54.500h2.500v13.500h-2.500" fill="none" stroke="#e6e6e6"/><path d="M1418.500 59.500l6 6M1424.500 59.500l-6 6" stroke="#ee5a6a" stroke-width="1.400"/></g>
<g><path d="M1413 78.500h-2.500v13.500h2.500M1418 78.500h2.500v7" fill="none" stroke="#e6e6e6"/><rect x="1413.500" y="80.500" width="4" height="3" fill="none" stroke="#55b1f2"/><circle cx="1415.500" cy="88" r="2.200" fill="#888" stroke="#c4c4c4"/><path d="M1417.500 91l5.500-6l2 2l-5.500 6l-2.500.5z" fill="#f6c76e"/><path d="M1423 85l1-1.200l2 2l-1 1.200z" fill="#ee6b6b"/></g>
<g><path d="M1414 102.500h-2.500v13.500h2.500M1419 102.500h2.500v5" fill="none" stroke="#f2f2f2"/><rect x="1413.500" y="104.500" width="4.500" height="3" fill="#8fd39a"/><circle cx="1416" cy="112" r="2.400" fill="#4fb86a" stroke="#9be0a8" stroke-width=".8"/><path d="M1419.500 106.500v9.500l2.300-2l1.700 3.500l1.600-.8l-1.700-3.400l3-.3z" fill="#fff" stroke="#333" stroke-width=".5"/></g>
<!-- Utilities -->
<path d="M1455.500 59.500v10M1482.500 59.500v10M1457.500 64.500h23" stroke="#d6d6d6" fill="none" stroke-width="1.100"/><path d="M1456 64.500l3.500-2.200v4.400zM1482 64.500l-3.500-2.200v4.400z" fill="#d6d6d6"/>
<rect x="1455" y="70.500" width="28" height="5.500" fill="#f6c76e"/><path d="M1457.500 70.500v3M1460.500 70.500v2M1463.500 70.500v3M1466.500 70.500v2M1469.500 70.500v3M1472.500 70.500v2M1475.500 70.500v3M1478.500 70.500v2M1481.500 70.500v3" stroke="#fdf0d2" stroke-width="1"/>
<g><path d="M1507 57v10l2.500-2.200l1.800 3.700l1.500-.8l-1.800-3.500l3.200-.2z" fill="#f4f4f4"/><rect x="1514" y="61" width="9" height="8" fill="#f4f4f4"/><path d="M1515.500 63.500h6M1515.500 65.500h6M1515.500 67.500h6" stroke="#3a6fb5" stroke-width="1"/><path d="M1516.500 52.500l-4 4.500h2.500l-1.500 3.500l5-5h-2.500l2-3z" fill="#f6c76e"/></g>
<g><rect x="1507.500" y="77.500" width="14" height="13.500" fill="none" stroke="#4fd68a" stroke-dasharray="1.600 1" stroke-width="1.200"/><rect x="1512.500" y="79.500" width="7" height="7" fill="#3fb574"/><rect x="1509.500" y="82.500" width="7" height="7" fill="#5d5d5d"/><rect x="1510.300" y="83.300" width="5.400" height="5.400" fill="#4fd68a"/><path d="M1516 82v10.500l2.500-2.200l1.800 3.700l1.600-.8l-1.800-3.500l3.300-.2z" fill="#fff" stroke="#444" stroke-width=".5"/></g>
<g><rect x="1509" y="101.500" width="12" height="15" fill="#dedede"/><rect x="1510.500" y="103" width="9" height="3" fill="#5d5d5d"/><g fill="#5d5d5d"><rect x="1510.500" y="107.500" width="2" height="2"/><rect x="1514" y="107.500" width="2" height="2"/><rect x="1517.500" y="107.500" width="2" height="2"/><rect x="1510.500" y="110.500" width="2" height="2"/><rect x="1514" y="110.500" width="2" height="2"/><rect x="1517.500" y="110.500" width="2" height="2"/><rect x="1510.500" y="113.500" width="2" height="2"/><rect x="1514" y="113.500" width="2" height="2"/><rect x="1517.500" y="113.500" width="2" height="2"/></g></g>
<!-- Clipboard -->
<path d="M1544 55h22v25h-22z" fill="#dda766"/><path d="M1549.500 56.500v-2h3v-2.500h5v2.500h3v2z" fill="#f6f6f6"/>
<path d="M1552 62h12.500l5.500 5.500v16.500h-18z" fill="#e2e2e2"/><path d="M1564.500 62v5.500h5.500z" fill="#f8f8f8"/>
<g><rect x="1587" y="53.500" width="12" height="13" fill="#d8d8d8"/><path d="M1589 56.500h8M1589 59h8M1589 61.500h5" stroke="#5d5d5d" stroke-width="1"/><path d="M1594.500 58.500l6.500 7M1601.500 58.500l-6.500 7" stroke="#fff" stroke-width="1.300"/><circle cx="1595.500" cy="66.500" r="1.600" fill="none" stroke="#fff"/><circle cx="1601" cy="66.500" r="1.600" fill="none" stroke="#fff"/></g>
<g><path d="M1588 77.500h6l3 3v8.500h-9z" fill="#cfcfcf"/><path d="M1591.500 80.500h6l3.500 3.500v8.500h-9.500z" fill="#e6e6e6" stroke="#5d5d5d" stroke-width=".6"/></g>
<!-- View: Base -->
<path d="M1625 56.500h14v10h18v13.500h-32z" fill="#dddddd"/>
<!-- featured apps icon -->
<rect x="809" y="31.500" width="11.500" height="6.500" rx="1.800" fill="#f2f2f2"/><path d="M812.500 36l2.500-2.500l2.500 2.500z" fill="#333"/>
</svg>
<div class="a" id="filetabs"></div>
<div class="a" style="left:0;top:168px;width:1910px;height:5px;background:#636363"></div>
<svg class="a" style="left:0;top:0" width="1910" height="175" viewBox="0 0 1910 175"><defs><linearGradient id="atab" x1="0" y1="0" x2="0" y2="1"><stop offset="0" stop-color="#727272"/><stop offset="1" stop-color="#5f5f5f"/></linearGradient></defs>
<defs><linearGradient id="itab" x1="0" y1="0" x2="0" y2="1"><stop offset="0" stop-color="#5c5c5c"/><stop offset="1" stop-color="#515151"/></linearGradient></defs>
<path d="M8 168.6C15 168.6 16 161 18.500 157C21 152 22 147.3 30 147.3H135.8C141.3 147.3 143.3 152 144.3 157C145.3 162 147.3 166.500 149.3 168.6Z" fill="url(#itab)" stroke="#6a6a6a" stroke-width=".9"/>
<path d="M140.5 168.6C142.5 166.500 144.5 162 145.5 157C146.5 152 148.5 147.3 154.0 147.3H259.8C265.3 147.3 267.3 152 268.3 157C269.3 162 271.3 166.500 273.3 168.6Z" fill="url(#itab)" stroke="#6a6a6a" stroke-width=".9"/>
<path d="M248.5 155.500l5 5M253.5 155.500l-5 5" stroke="#303030" stroke-width="1.800"/>
<path d="M263.5 168.6C265.5 166.500 267.5 162 268.5 157C269.5 152 271.5 147.3 277.0 147.3H382.8C388.3 147.3 390.3 152 391.3 157C392.3 162 394.3 166.500 396.3 168.6Z" fill="url(#itab)" stroke="#6a6a6a" stroke-width=".9"/>
<path d="M371.5 155.500l5 5M376.5 155.500l-5 5" stroke="#303030" stroke-width="1.800"/>
<path d="M386.5 168.6C388.5 166.500 390.5 162 391.5 157C392.5 152 394.5 147.3 400.0 147.3H505.8C511.3 147.3 513.3 152 514.3 157C515.3 162 517.3 166.500 519.3 168.6Z" fill="url(#itab)" stroke="#6a6a6a" stroke-width=".9"/>
<path d="M494.5 155.500l5 5M499.5 155.500l-5 5" stroke="#303030" stroke-width="1.800"/>
<path d="M509.5 168.6C511.5 166.500 513.5 162 514.5 157C515.5 152 517.5 147.3 523.0 147.3H628.8C634.3 147.3 636.3 152 637.3 157C638.3 162 640.3 166.500 642.3 168.6Z" fill="url(#itab)" stroke="#6a6a6a" stroke-width=".9"/>
<path d="M617.5 155.500l5 5M622.5 155.500l-5 5" stroke="#303030" stroke-width="1.800"/>
<path d="M632.5 168.6C634.5 166.500 636.5 162 637.5 157C638.5 152 640.5 147.3 646.0 147.3H751.8C757.3 147.3 759.3 152 760.3 157C761.3 162 763.3 166.500 765.3 168.6Z" fill="url(#itab)" stroke="#6a6a6a" stroke-width=".9"/>
<path d="M740.5 155.500l5 5M745.5 155.500l-5 5" stroke="#303030" stroke-width="1.800"/>
<path d="M755.5 168.6C757.5 166.500 759.5 162 760.5 157C761.5 152 763.5 147.3 769.0 147.3H874.8C880.3 147.3 882.3 152 883.3 157C884.3 162 886.3 166.500 888.3 168.6Z" fill="url(#itab)" stroke="#6a6a6a" stroke-width=".9"/>
<path d="M863.5 155.500l5 5M868.5 155.500l-5 5" stroke="#303030" stroke-width="1.800"/>
<path d="M878.5 168.6C880.5 166.500 882.5 162 883.5 157C884.5 152 886.5 147.3 892.0 147.3H997.8C1003.3 147.3 1005.3 152 1006.3 157C1007.3 162 1009.3 166.500 1011.3 168.6Z" fill="url(#itab)" stroke="#6a6a6a" stroke-width=".9"/>
<path d="M986.5 155.500l5 5M991.5 155.500l-5 5" stroke="#303030" stroke-width="1.800"/>
<path d="M1001.5 168.6C1003.5 166.500 1005.5 162 1006.5 157C1007.5 152 1009.5 147.3 1015.0 147.3H1120.8C1126.3 147.3 1128.3 152 1129.3 157C1130.3 162 1132.3 166.500 1134.3 168.6Z" fill="url(#itab)" stroke="#6a6a6a" stroke-width=".9"/>
<path d="M1109.5 155.500l5 5M1114.5 155.500l-5 5" stroke="#303030" stroke-width="1.800"/>
<path d="M1124.5 168.6C1126.5 166.500 1128.5 162 1129.5 157C1130.5 152 1132.5 147.3 1138.0 147.3H1243.8C1249.3 147.3 1251.3 152 1252.3 157C1253.3 162 1255.3 166.500 1257.3 168.6Z" fill="url(#itab)" stroke="#6a6a6a" stroke-width=".9"/>
<path d="M1232.5 155.500l5 5M1237.5 155.500l-5 5" stroke="#303030" stroke-width="1.800"/>
<path d="M1247.5 168.6C1249.5 166.500 1251.5 162 1252.5 157C1253.5 152 1255.5 147.3 1261.0 147.3H1366.8C1372.3 147.3 1374.3 152 1375.3 157C1376.3 162 1378.3 166.500 1380.3 168.6Z" fill="url(#itab)" stroke="#6a6a6a" stroke-width=".9"/>
<path d="M1355.5 155.500l5 5M1360.5 155.500l-5 5" stroke="#303030" stroke-width="1.800"/>
<path d="M1370.5 168.6C1372.5 166.500 1374.5 162 1375.5 157C1376.5 152 1378.5 147.3 1384.0 147.3H1489.8C1495.3 147.3 1497.3 152 1498.3 157C1499.3 162 1501.3 166.500 1503.3 168.6Z" fill="url(#itab)" stroke="#6a6a6a" stroke-width=".9"/>
<path d="M1478.5 155.500l5 5M1483.5 155.500l-5 5" stroke="#303030" stroke-width="1.800"/>
<path d="M1493.5 168.6C1495.5 166.500 1497.5 162 1498.5 157C1499.5 152 1501.5 147.3 1507.0 147.3H1612.8C1618.3 147.3 1620.3 152 1621.3 157C1622.3 162 1624.3 166.500 1626.3 168.6Z" fill="url(#itab)" stroke="#6a6a6a" stroke-width=".9"/>
<path d="M1601.5 155.500l5 5M1606.5 155.500l-5 5" stroke="#303030" stroke-width="1.800"/>
<path d="M1616.5 168.6C1618.5 166.500 1620.5 162 1621.5 157C1622.5 152 1624.5 147.3 1630.0 147.3H1735.8C1741.3 147.3 1743.3 152 1744.3 157C1745.3 162 1747.3 166.500 1749.3 168.6Z" fill="url(#itab)" stroke="#6a6a6a" stroke-width=".9"/>
<path d="M1724.5 155.500l5 5M1729.5 155.500l-5 5" stroke="#303030" stroke-width="1.800"/>
<path d="M1739.5 168.6C1741.5 166.500 1743.5 162 1744.5 157C1745.5 152 1747.5 147.3 1753.0 147.3H1858.8C1864.3 147.3 1866.3 152 1867.3 157C1868.3 162 1870.3 166.500 1872.3 168.6Z" fill="url(#atab)" stroke="#8a8a8a" stroke-width=".9"/>
<path d="M1847.5 155.500l5 5M1852.5 155.500l-5 5" stroke="#4a4a4a" stroke-width="1.800"/>
<path d="M1874 150.500h12c7 0 9 6 10 15.500h-12c-7 0-9-6-10-15.500z" fill="#505050" stroke="#343434"/>
<path d="M1880 158.500h9M1884.500 154v9" stroke="#e6e6e6" stroke-width="1.800"/>
<path d="M1903.500 152.500l3.500 3.500l3.500-3.500M1903.500 157.500l3.500 3.500l3.500-3.500" stroke="#c8c8c8" stroke-width="1.500" fill="none"/>
</svg>
<div class="t" style="left:31.0px;top:151.5px;color:#cdcdcd;font-size:12px;line-height:14px;height:14px;letter-spacing:-0.07px;">Start</div>
<div class="t" style="left:155.0px;top:151.5px;color:#cdcdcd;font-size:12px;line-height:14px;height:14px;letter-spacing:0.09px;">Int-Lemari7*</div>
<div class="t" style="left:278.0px;top:151.5px;color:#cdcdcd;font-size:12px;line-height:14px;height:14px;letter-spacing:0.03px;">Int-Lemari8</div>
<div class="t" style="left:401.0px;top:151.5px;color:#cdcdcd;font-size:12px;line-height:14px;height:14px;letter-spacing:0.09px;">Int-Lemari9*</div>
<div class="t" style="left:524.0px;top:151.5px;color:#cdcdcd;font-size:12px;line-height:14px;height:14px;letter-spacing:0.07px;">Int-Lemari10*</div>
<div class="t" style="left:647.0px;top:151.5px;color:#cdcdcd;font-size:12px;line-height:14px;height:14px;letter-spacing:0.10px;">Int-Lemari11*</div>
<div class="t" style="left:770.0px;top:151.5px;color:#cdcdcd;font-size:12px;line-height:14px;height:14px;letter-spacing:0.13px;">Int-Meja 2*</div>
<div class="t" style="left:893.0px;top:151.5px;color:#cdcdcd;font-size:12px;line-height:14px;height:14px;letter-spacing:-0.01px;">Int-Meja Kerja</div>
<div class="t" style="left:1016.0px;top:151.5px;color:#cdcdcd;font-size:12px;line-height:14px;height:14px;letter-spacing:-0.15px;">Int-Meja Rias 2*</div>
<div class="t" style="left:1139.0px;top:151.5px;color:#cdcdcd;font-size:12px;line-height:14px;height:14px;letter-spacing:-0.10px;">Int-Meja Rias*</div>
<div class="t" style="left:1262.0px;top:151.5px;color:#cdcdcd;font-size:12px;line-height:14px;height:14px;letter-spacing:-0.07px;">Int-meja TV</div>
<div class="t" style="left:1385.0px;top:151.5px;color:#cdcdcd;font-size:12px;line-height:14px;height:14px;letter-spacing:-0.09px;">Int-Meja TV2*</div>
<div class="t" style="left:1508.0px;top:151.5px;color:#cdcdcd;font-size:12px;line-height:14px;height:14px;letter-spacing:-0.12px;">Int-Meja TV3</div>
<div class="t" style="left:1631.0px;top:151.5px;color:#cdcdcd;font-size:12px;line-height:14px;height:14px;letter-spacing:0.21px;">Int-Meja</div>
<div class="t" style="left:1754.0px;top:151.5px;color:#f2f2f2;font-size:12px;line-height:14px;height:14px;letter-spacing:0.13px;">Int-Meja2*</div><div class="a" id="viewport"></div>
<div class="t" style="left:3.0px;top:180.0px;color:#e4e4e4;font-size:12px;line-height:14px;height:14px;letter-spacing:0.05px;">[−][SW Isometric][2D Wireframe]</div>
<svg class="a" style="left:0;top:0" width="1910" height="1030" viewBox="0 0 1910 1030">
<path d="M716.8,892.7 L1136.8,650.9 M1136.8,650.9 L971.8,555.7 M971.8,555.7 L551.8,797.4 M551.8,797.4 L716.8,892.7 M716.8,756.0 L1136.8,514.2 M1136.8,514.2 L971.8,419.0 M971.8,419.0 L551.8,660.7 M551.8,660.7 L716.8,756.0 M716.8,892.7 L716.8,756.0 M551.8,797.4 L551.8,660.7 M1136.8,650.9 L1136.8,514.2 M971.8,555.7 L971.8,419.0 M716.8,756.0 L1136.8,514.2 M1136.8,514.2 L971.8,419.0 M971.8,419.0 L551.8,660.7 M551.8,660.7 L716.8,756.0 M716.8,728.4 L1136.8,486.6 M1136.8,486.6 L971.8,391.4 M971.8,391.4 L551.8,633.1 M551.8,633.1 L716.8,728.4 M716.8,756.0 L716.8,728.4 M551.8,660.7 L551.8,633.1 M1136.8,514.2 L1136.8,486.6 M971.8,419.0 L971.8,391.4 M716.8,920.4 L752.2,900.0 M752.2,900.0 L716.8,879.5 M716.8,879.5 L681.2,899.9 M681.2,899.9 L716.8,920.4 M716.8,892.7 L752.2,872.3 M752.2,872.3 L716.8,851.8 M716.8,851.8 L681.2,872.2 M681.2,872.2 L716.8,892.7 M716.8,920.4 L716.8,892.7 M681.2,899.9 L681.2,872.2 M752.2,900.0 L752.2,872.3 M716.8,879.5 L716.8,851.8 M1101.2,699.1 L1136.8,678.6 M1136.8,678.6 L1101.2,658.2 M1101.2,658.2 L1065.8,678.6 M1065.8,678.6 L1101.2,699.1 M1101.2,671.4 L1136.8,650.9 M1136.8,650.9 L1101.2,630.5 M1101.2,630.5 L1065.8,650.9 M1065.8,650.9 L1101.2,671.4 M1101.2,699.1 L1101.2,671.4 M1065.8,678.6 L1065.8,650.9 M1136.8,678.6 L1136.8,650.9 M1101.2,658.2 L1101.2,630.5 M587.2,845.6 L622.8,825.2 M622.8,825.2 L587.2,804.7 M587.2,804.7 L551.8,825.1 M551.8,825.1 L587.2,845.6 M587.2,817.9 L622.8,797.5 M622.8,797.5 L587.2,777.0 M587.2,777.0 L551.8,797.4 M551.8,797.4 L587.2,817.9 M587.2,845.6 L587.2,817.9 M551.8,825.1 L551.8,797.4 M622.8,825.2 L622.8,797.5 M587.2,804.7 L587.2,777.0 M971.8,624.3 L1007.2,603.9 M1007.2,603.9 L971.8,583.4 M971.8,583.4 L936.2,603.8 M936.2,603.8 L971.8,624.3 M971.8,596.6 L1007.2,576.2 M1007.2,576.2 L971.8,555.7 M971.8,555.7 L936.2,576.1 M936.2,576.1 L971.8,596.6 M971.8,624.3 L971.8,596.6 M936.2,603.8 L936.2,576.1 M1007.2,603.9 L1007.2,576.2 M971.8,583.4 L971.8,555.7 M752.2,831.6 L839.5,781.3 M839.5,781.3 L839.5,726.7 M839.5,726.7 L752.2,777.0 M752.2,777.0 L752.2,831.6 M758.2,821.2 L833.5,777.9 M833.5,777.9 L833.5,737.1 M833.5,737.1 L758.2,780.4 M758.2,780.4 L758.2,821.2 M839.5,781.3 L926.8,731.1 M926.8,731.1 L926.8,676.5 M926.8,676.5 L839.5,726.7 M839.5,726.7 L839.5,781.3 M845.5,771.0 L920.8,727.6 M920.8,727.6 L920.8,686.9 M920.8,686.9 L845.5,730.2 M845.5,730.2 L845.5,771.0 M926.8,731.1 L1014.0,680.9 M1014.0,680.9 L1014.0,626.3 M1014.0,626.3 L926.8,676.5 M926.8,676.5 L926.8,731.1 M932.8,720.7 L1008.0,677.4 M1008.0,677.4 L1008.0,636.7 M1008.0,636.7 L932.8,680.0 M932.8,680.0 L932.8,720.7 M1014.0,680.9 L1101.2,630.7 M1101.2,630.7 L1101.2,576.1 M1101.2,576.1 L1014.0,626.3 M1014.0,626.3 L1014.0,680.9 M1020.0,670.5 L1095.2,627.2 M1095.2,627.2 L1095.2,586.5 M1095.2,586.5 L1020.0,629.8 M1020.0,629.8 L1020.0,670.5 M764.8,673.1 L764.7,670.7 L764.4,668.5 L763.9,666.4 L763.3,664.4 L762.5,662.7 L761.5,661.1 L760.4,659.7 L759.1,658.5 L757.7,657.5 L756.2,656.8 L754.5,656.3 L752.8,656.0 L750.9,655.9 L749.0,656.1 L747.0,656.6 L744.9,657.2 L742.8,658.1 L740.8,659.2 L738.7,660.5 L736.6,662.0 L734.5,663.7 L732.5,665.6 L730.6,667.6 L728.8,669.8 L727.0,672.1 L725.3,674.5 L723.8,677.1 L722.4,679.7 L721.1,682.3 L720.0,685.0 L719.0,687.7 L718.2,690.4 L717.6,693.1 L717.1,695.7 L716.8,698.2 L716.8,700.7 L716.8,703.1 L717.1,705.3 L717.6,707.4 L718.2,709.3 L719.0,711.1 L720.0,712.7 L721.1,714.1 L722.4,715.3 L723.8,716.2 L725.3,717.0 L727.0,717.5 L728.8,717.8 L730.6,717.8 L732.5,717.6 L734.5,717.2 L736.6,716.6 L738.7,715.7 L740.8,714.6 L742.8,713.3 L744.9,711.8 L747.0,710.1 L749.0,708.2 L750.9,706.2 L752.8,704.0 L754.5,701.7 L756.2,699.2 L757.7,696.7 L759.1,694.1 L760.4,691.5 L761.5,688.8 L762.5,686.1 L763.3,683.4 L763.9,680.7 L764.4,678.1 L764.7,675.5 L764.8,673.1Z M599.8,577.8 L599.7,575.4 L599.4,573.2 L598.9,571.1 L598.3,569.2 L597.5,567.4 L596.5,565.8 L595.4,564.4 L594.1,563.2 L592.7,562.3 L591.2,561.5 L589.5,561.0 L587.8,560.7 L585.9,560.7 L584.0,560.9 L582.0,561.3 L579.9,561.9 L577.8,562.8 L575.8,563.9 L573.7,565.2 L571.6,566.7 L569.5,568.4 L567.5,570.3 L565.6,572.4 L563.8,574.5 L562.0,576.9 L560.3,579.3 L558.8,581.8 L557.4,584.4 L556.1,587.1 L555.0,589.7 L554.0,592.4 L553.2,595.1 L552.6,597.8 L552.1,600.4 L551.8,603.0 L551.8,605.4 L551.8,607.8 L552.1,610.0 L552.6,612.1 L553.2,614.1 L554.0,615.8 L555.0,617.4 L556.1,618.8 L557.4,620.0 L558.8,621.0 L560.3,621.7 L562.0,622.2 L563.8,622.5 L565.6,622.6 L567.5,622.4 L569.5,622.0 L571.6,621.3 L573.7,620.4 L575.8,619.3 L577.8,618.0 L579.9,616.5 L582.0,614.8 L584.0,612.9 L585.9,610.9 L587.8,608.7 L589.5,606.4 L591.2,604.0 L592.7,601.4 L594.1,598.8 L595.4,596.2 L596.5,593.5 L597.5,590.8 L598.3,588.1 L598.9,585.4 L599.4,582.8 L599.7,580.3 L599.8,577.8Z M764.8,673.1 L599.8,577.8 M740.8,659.2 L575.8,563.9 M716.8,700.7 L551.8,605.4 M740.8,714.6 L575.8,619.3 M757.7,657.5 L592.7,562.3 M723.8,716.2 L558.8,621.0 M1136.8,458.9 L1136.7,456.6 L1136.4,454.3 L1135.9,452.2 L1135.3,450.3 L1134.5,448.5 L1133.5,446.9 L1132.4,445.6 L1131.1,444.4 L1129.7,443.4 L1128.2,442.7 L1126.5,442.1 L1124.8,441.9 L1122.9,441.8 L1121.0,442.0 L1119.0,442.4 L1116.9,443.1 L1114.8,444.0 L1112.8,445.1 L1110.7,446.4 L1108.6,447.9 L1106.5,449.6 L1104.5,451.5 L1102.6,453.5 L1100.8,455.7 L1099.0,458.0 L1097.3,460.4 L1095.8,462.9 L1094.4,465.5 L1093.1,468.2 L1092.0,470.9 L1091.0,473.6 L1090.2,476.3 L1089.6,478.9 L1089.1,481.6 L1088.8,484.1 L1088.8,486.6 L1088.8,488.9 L1089.1,491.2 L1089.6,493.3 L1090.2,495.2 L1091.0,497.0 L1092.0,498.6 L1093.1,500.0 L1094.4,501.2 L1095.8,502.1 L1097.3,502.9 L1099.0,503.4 L1100.8,503.7 L1102.6,503.7 L1104.5,503.5 L1106.5,503.1 L1108.6,502.4 L1110.7,501.6 L1112.8,500.5 L1114.8,499.2 L1116.9,497.6 L1119.0,495.9 L1121.0,494.1 L1122.9,492.0 L1124.8,489.8 L1126.5,487.5 L1128.2,485.1 L1129.7,482.6 L1131.1,480.0 L1132.4,477.3 L1133.5,474.6 L1134.5,471.9 L1135.3,469.3 L1135.9,466.6 L1136.4,464.0 L1136.7,461.4 L1136.8,458.9Z M971.8,363.7 L971.7,361.3 L971.4,359.1 L970.9,357.0 L970.3,355.0 L969.5,353.3 L968.5,351.7 L967.4,350.3 L966.1,349.1 L964.7,348.1 L963.2,347.4 L961.5,346.9 L959.8,346.6 L957.9,346.6 L956.0,346.7 L954.0,347.2 L951.9,347.8 L949.8,348.7 L947.8,349.8 L945.7,351.1 L943.6,352.6 L941.5,354.3 L939.5,356.2 L937.6,358.2 L935.8,360.4 L934.0,362.7 L932.3,365.2 L930.8,367.7 L929.4,370.3 L928.1,372.9 L927.0,375.6 L926.0,378.3 L925.2,381.0 L924.6,383.7 L924.1,386.3 L923.8,388.8 L923.8,391.3 L923.8,393.7 L924.1,395.9 L924.6,398.0 L925.2,400.0 L926.0,401.7 L927.0,403.3 L928.1,404.7 L929.4,405.9 L930.8,406.9 L932.3,407.6 L934.0,408.1 L935.8,408.4 L937.6,408.4 L939.5,408.3 L941.5,407.8 L943.6,407.2 L945.7,406.3 L947.8,405.2 L949.8,403.9 L951.9,402.4 L954.0,400.7 L956.0,398.8 L957.9,396.8 L959.8,394.6 L961.5,392.3 L963.2,389.8 L964.7,387.3 L966.1,384.7 L967.4,382.1 L968.5,379.4 L969.5,376.7 L970.3,374.0 L970.9,371.3 L971.4,368.7 L971.7,366.2 L971.8,363.7Z M1136.8,458.9 L971.8,363.7 M1112.8,445.1 L947.8,349.8 M1088.8,486.6 L923.8,391.3 M1112.8,500.5 L947.8,405.2 M1129.7,443.4 L964.7,348.1 M1095.8,502.1 L930.8,406.9" fill="none" stroke="#f27a7e" stroke-width="1.200"/>
<path d="M551.8,468.9 L556.1,471.5 L560.4,474.2 L564.7,477.0 L569.0,479.9 L573.3,483.0 L577.6,486.2 L581.8,489.5 L586.1,492.9 L590.3,496.5 L594.5,500.1 L598.6,503.9 L602.7,507.7 L606.8,511.7 L610.9,515.8 L614.9,520.0 L618.9,524.2 L622.8,528.6 L626.7,533.1 L630.5,537.6 L634.2,542.2 L638.0,547.0 L641.6,551.7 L645.2,556.6 L648.7,561.5 L652.2,566.5 L655.6,571.6 L658.9,576.7 L662.2,581.9 L665.3,587.2 L668.4,592.5 L671.4,597.8 L674.4,603.2 L677.2,608.6 L680.0,614.1 L682.7,619.5 L685.2,625.1 L687.7,630.6 L690.1,636.2 L692.4,641.7 L694.6,647.3 L696.8,652.9 L698.8,658.5 L700.7,664.1 L702.5,669.7 L704.2,675.3 L705.8,680.9 L707.3,686.5 L708.7,692.1 L710.0,697.6 L711.1,703.1 L712.2,708.6 L713.1,714.0 L714.0,719.4 L714.7,724.8 L715.3,730.1 L715.8,735.4 L716.2,740.7 L716.5,745.8 L716.7,750.9 L716.8,756.0 M971.8,227.2 L976.1,229.7 L980.4,232.4 L984.7,235.2 L989.0,238.2 L993.3,241.2 L997.6,244.4 L1001.8,247.7 L1006.1,251.2 L1010.3,254.7 L1014.5,258.4 L1018.6,262.1 L1022.7,266.0 L1026.8,270.0 L1030.9,274.0 L1034.9,278.2 L1038.9,282.5 L1042.8,286.9 L1046.7,291.3 L1050.5,295.9 L1054.2,300.5 L1058.0,305.2 L1061.6,310.0 L1065.2,314.9 L1068.7,319.8 L1072.2,324.8 L1075.6,329.9 L1078.9,335.0 L1082.2,340.2 L1085.3,345.4 L1088.4,350.7 L1091.4,356.0 L1094.4,361.4 L1097.2,366.8 L1100.0,372.3 L1102.7,377.8 L1105.2,383.3 L1107.7,388.8 L1110.1,394.4 L1112.4,400.0 L1114.6,405.6 L1116.8,411.2 L1118.8,416.8 L1120.7,422.4 L1122.5,428.0 L1124.2,433.6 L1125.8,439.2 L1127.3,444.8 L1128.7,450.3 L1130.0,455.8 L1131.1,461.4 L1132.2,466.8 L1133.1,472.3 L1134.0,477.7 L1134.7,483.1 L1135.3,488.4 L1135.8,493.7 L1136.2,498.9 L1136.5,504.1 L1136.7,509.2 L1136.8,514.2 M971.8,227.2 L971.8,419.0" fill="none" stroke="#90908b" stroke-width="1.050"/>
<!-- viewport controls -->
<path d="M1851 190.500h10" stroke="#f0f0f0" stroke-width="2.400"/>
<path d="M1872 186h6.500v6h-6.500zM1874.500 186v-2.500h6.500v6h-2.500" stroke="#f0f0f0" stroke-width="1.500" fill="none"/>
<path d="M1891.500 184.500l8 7.500M1899.500 184.500l-8 7.500" stroke="#f0f0f0" stroke-width="2"/>
<!-- UCS icon -->
<g stroke="#f2f2f2" stroke-width="1.150" fill="none"><path d="M52 982.500V942M52 982.500L88 963M52 982.500L16 963M52 979l6.500 4l-6.500 4l-6.500-4z"/></g>
<g font-family="Liberation Sans,sans-serif" fill="#f2f2f2" font-size="18.500" stroke="#212830" stroke-width=".7"><text x="57" y="941.500" textLength="13.500" lengthAdjust="spacingAndGlyphs">Z</text><text x="18" y="959.500" textLength="13.500" lengthAdjust="spacingAndGlyphs">Y</text><text x="92" y="962.500" textLength="13.500" lengthAdjust="spacingAndGlyphs">X</text></g>
<!-- ViewCube -->
<defs><radialGradient id="vcs" cx="0.5" cy="0.5" r="0.5"><stop offset="0" stop-color="#14181d" stop-opacity=".9"/><stop offset=".7" stop-color="#14181d" stop-opacity=".6"/><stop offset="1" stop-color="#14181d" stop-opacity="0"/></radialGradient>
<linearGradient id="vcl" x1="0" y1="0" x2="0" y2="1"><stop offset="0" stop-color="#aaabad"/><stop offset="1" stop-color="#939393"/></linearGradient>
<linearGradient id="vcf" x1="0" y1="0" x2="0" y2="1"><stop offset="0" stop-color="#b2b3b6"/><stop offset="1" stop-color="#999a9b"/></linearGradient></defs>
<ellipse cx="1829" cy="306" rx="56.800" ry="35.800" fill="none" stroke="#4a4b4d" stroke-width="13.600"/>

<g font-family="Liberation Sans,sans-serif" font-weight="bold" fill="#cbcbcb" font-size="19"><text x="0" y="0" text-anchor="middle" transform="translate(1782.500 336.500) rotate(-24) scale(1.300 .850) skewX(-12)">W</text><text x="0" y="0" text-anchor="middle" transform="translate(1875 336) rotate(22) scale(1.300 .850) skewX(12)">S</text><text x="0" y="0" text-anchor="middle" font-size="15" fill="#bdbdbd" transform="translate(1790 283) rotate(22) scale(1.250 .850) skewX(12)">N</text><text x="0" y="0" text-anchor="middle" font-size="15" fill="#bdbdbd" transform="translate(1870 283) rotate(-22) scale(1.250 .850) skewX(-12)">E</text></g>
<ellipse cx="1829" cy="304" rx="44" ry="24" fill="url(#vcs)"/>
<path d="M1829 242L1864 259.500L1829 279.500L1794.500 260z" fill="#aeb0b4" stroke="#8d8f92" stroke-width=".8"/>
<path d="M1794.500 260L1829 279.500V319.500L1796 300.500z" fill="url(#vcl)" stroke="#8d8f92" stroke-width=".8"/>
<path d="M1864 259.500L1829 279.500V319.500L1862.500 300z" fill="url(#vcf)" stroke="#8d8f92" stroke-width=".8"/>
<g font-family="Liberation Sans,sans-serif" font-weight="bold" fill="#54565a" font-size="9.200"><text x="0" y="0" text-anchor="middle" transform="matrix(.82 -.46 .82 .46 1831.500 262.500)" font-size="10">TOP</text><text x="0" y="0" text-anchor="middle" transform="matrix(.9 .5 0 1 1812 293)">LEFT</text><text x="0" y="0" text-anchor="middle" transform="matrix(.9 -.5 0 1 1846.500 294)">FRONT</text></g>
<!-- WCS -->
<rect x="1805.500" y="366.500" width="47" height="16.500" rx="3.500" fill="#b9b9b9" stroke="#8a8a8a"/>
<text x="1810" y="378.800" font-family="Liberation Sans,sans-serif" font-size="11" fill="#555">WCS</text>
<path d="M1839 372h8l-4 4.500z" fill="none" stroke="#7a7a7a" stroke-width="1"/>
<!-- Nav bar -->
<rect x="1876.500" y="408.500" width="31" height="213" rx="4" fill="#53565b" stroke="#15181c" stroke-dasharray="1 1.500"/>
<g stroke="#3e4145" stroke-width="1.400" fill="none">
<circle cx="1892" cy="439" r="10"/><circle cx="1891" cy="440" r="6.500"/><path d="M1892 429h10v10"/>
<path d="M1884 490c0-8-2-10 0-11s3 3 3 5v-9c0-2 3-2 3 0v-3c0-2 3-2 3 0v3c0-2 3-2 3 0v5c0-2 3-2 3 0c0 8-1 10-3 13h-9z"/>
<path d="M1881 499l12 12M1893 499l-12 12M1881 499h4M1881 499v4M1893 499h-4M1893 499v4"/><circle cx="1896" cy="514" r="4"/><path d="M1899 517l4 4"/>
<path d="M1892 536v22M1887 541l5-5l5 5"/><ellipse cx="1892" cy="549" rx="11" ry="4.500"/>
<rect x="1881" y="579" width="5.500" height="5"/><rect x="1888.500" y="579" width="5.500" height="5"/><rect x="1896" y="579" width="5.500" height="5"/><rect x="1881" y="587" width="16" height="12"/>
</g>
<path d="M1886 590v6.500l6.500-3.250z" fill="#3e4145"/>
<g fill="#3e4145"><path d="M1889.500 458h5l-2.500 3z"/><path d="M1889.500 527.500h5l-2.500 3z"/><path d="M1889.500 566.500h5l-2.500 3z"/></g>
<circle cx="1902" cy="414" r="3" fill="none" stroke="#3e4145"/><path d="M1900 412l4 4M1904 412l-4 4" stroke="#3e4145" stroke-width=".8"/>
<circle cx="1902" cy="615.500" r="3" fill="none" stroke="#3e4145"/>
</svg>
<div class="a" style="left:403px;top:977px;width:1114px;height:25px;background:#c3c4c6;border-radius:2px"></div>
<div class="a" style="left:403px;top:977px;width:54px;height:25px;background:linear-gradient(#525252,#333);border-radius:3px 0 0 3px;border:1px solid #5a5a5a;border-right:none"></div>
<svg class="a" style="left:0;top:0" width="1910" height="1030" viewBox="0 0 1910 1030">
<g fill="#7a7a7a"><rect x="406" y="980" width="1.700" height="1.700"/><rect x="406" y="983" width="1.700" height="1.700"/><rect x="406" y="986" width="1.700" height="1.700"/><rect x="406" y="989" width="1.700" height="1.700"/><rect x="406" y="992" width="1.700" height="1.700"/><rect x="406" y="995" width="1.700" height="1.700"/><rect x="406" y="998" width="1.700" height="1.700"/><rect x="409" y="980" width="1.700" height="1.700"/><rect x="409" y="983" width="1.700" height="1.700"/><rect x="409" y="986" width="1.700" height="1.700"/><rect x="409" y="989" width="1.700" height="1.700"/><rect x="409" y="992" width="1.700" height="1.700"/><rect x="409" y="995" width="1.700" height="1.700"/><rect x="409" y="998" width="1.700" height="1.700"/></g>
<path d="M419 985l8 7.500M427 985l-8 7.500" stroke="#e4e4e4" stroke-width="2"/>
<path d="M440.500 983.500a3.500 3.500 0 0 1 4.500 4.300l6.500 6.200l-2 2l-6.500-6.200a3.500 3.500 0 0 1-4.300-4.500l2.300 2.200l1.800-1.800z" fill="#e4e4e4"/>
<rect x="462.500" y="982.500" width="13.500" height="12.500" rx="1.500" fill="#c9c9c9" stroke="#555" stroke-width="1.200"/><path d="M465 986l3.500 2.800l-3.500 2.800M470 992.500h3.500" stroke="#444" stroke-width="1.200" fill="none"/>
<path d="M480 987.500h6l-3 3.200z" fill="#555"/>
<path d="M1505.500 991l3.700-4l3.700 4z" fill="#222"/>
</svg>
<div class="t" style="left:493.0px;top:982.5px;color:#787878;font-size:12.5px;line-height:15px;height:15px;letter-spacing:-0.57px;font-family:'Liberation Mono',monospace;font-style:italic;">Type a command</div>
<svg class="a" style="left:0;top:0" width="1910" height="1030" viewBox="0 0 1910 1030">
<path d="M1546.500 903H1925V997.500H1829L1841.500 1016.500L1812 997.500H1546.500A16 16 0 0 1 1530.500 981.500V919A16 16 0 0 1 1546.500 903Z" fill="#ffffe1" stroke="#0a0a0a" stroke-width="1.600"/>
<rect x="1896.500" y="912.500" width="16" height="14.500" fill="#fff" stroke="#222"/>
<path d="M1900 916l7 7M1907 916l-7 7" stroke="#111" stroke-width="2"/>
</svg>
<div class="t" style="left:1549.0px;top:912.5px;color:#0c0c0c;font-size:12px;line-height:14px;height:14px;letter-spacing:-0.13px;font-weight:bold;">3D Display Performance Notification</div>
<div class="t" style="left:1545.0px;top:934.5px;color:#111;font-size:12px;line-height:14px;height:14px;letter-spacing:-0.09px;">Enhanced 3D performance is not available for the current visual style.</div>
<div class="t" style="left:1545.0px;top:950.0px;color:#111;font-size:12px;line-height:14px;height:14px;letter-spacing:-0.20px;">The required settings are listed here:</div>
<div class="t" style="left:1545.0px;top:971.0px;color:#0a0aee;font-size:12px;line-height:14px;height:14px;letter-spacing:-0.62px;text-decoration:underline;">VISUALSTYLES Command</div><div class="a" id="status"></div>
<div class="a" style="left:0;top:1003px;width:1910px;height:1px;background:#4e4e4e"></div>
<div class="a" style="left:1356px;top:1004px;width:554px;height:26px;background:#3e3e3e"></div>
<div class="a" style="left:1357px;top:1005px;width:48px;height:25px;background:#4d4d4d;border:1px solid #5e5e5e;border-bottom:none"></div>
<div class="a" style="left:1407px;top:1005px;width:65px;height:25px;background:#4d4d4d;border:1px solid #5e5e5e;border-bottom:none"></div>
<div class="a" style="left:1474px;top:1005px;width:102px;height:25px;background:#4d4d4d;border:1px solid #5e5e5e;border-bottom:none"></div>
<div class="a" style="left:1578px;top:1005px;width:60px;height:25px;background:#4d4d4d;border:1px solid #5e5e5e;border-bottom:none"></div>
<div class="a" style="left:1642px;top:1005px;width:107px;height:25px;background:#4d4d4d;border:1px solid #5e5e5e;border-bottom:none"></div>
<div class="a" style="left:1751px;top:1005px;width:39px;height:25px;background:#4d4d4d;border:1px solid #5e5e5e;border-bottom:none"></div>
<div class="a" style="left:1791px;top:1005px;width:25px;height:25px;background:#4d4d4d;border:1px solid #5e5e5e;border-bottom:none"></div>
<div class="a" style="left:1818px;top:1005px;width:24px;height:25px;background:#4d4d4d;border:1px solid #5e5e5e;border-bottom:none"></div>
<div class="a" style="left:1844px;top:1005px;width:23px;height:25px;background:#4d4d4d;border:1px solid #5e5e5e;border-bottom:none"></div>
<div class="a" style="left:1869px;top:1005px;width:41px;height:25px;background:#4d4d4d;border:1px solid #5e5e5e;border-bottom:none"></div>
<div class="a" style="left:1499px;top:1006px;width:22px;height:24px;background:#5b8ec4"></div>
<div class="a" style="left:1578px;top:1006px;width:22px;height:24px;background:#5b8ec4"></div>
<div class="a" style="left:1602px;top:1006px;width:22px;height:24px;background:#5b8ec4"></div>
<div class="a" style="left:1644px;top:1006px;width:22px;height:24px;background:#5b8ec4"></div>
<div class="t" style="left:1361.5px;top:1009.0px;color:#f0f0f0;font-size:13px;line-height:15px;height:15px;letter-spacing:-1.15px;">MODEL</div>
<div class="t" style="left:1719.0px;top:1009.5px;color:#f0f0f0;font-size:12px;line-height:14px;height:14px;letter-spacing:-0.23px;">1:1</div>
<svg class="a" style="left:0;top:0" width="1910" height="1030" viewBox="0 0 1910 1030">
<defs><linearGradient id="mtab" x1="0" y1="0" x2="0" y2="1"><stop offset="0" stop-color="#4e4e4e"/><stop offset="1" stop-color="#6a6a6a"/></linearGradient></defs>
<path d="M5 1003.500c5 0 6 2 8 8c2 7 3 9.500 8 9.500h39c4 0 5.500-2.500 7-9c1.500-6 2-8.500 5-8.500z" fill="url(#mtab)"/>
<path d="M72 1003.500c-3 0-3.500 2.500-5 8.500c-1 4-1.500 6.500-2.500 7.500c1.500 1.500 3 1.500 6 1.500h53c4 0 5.500-2.500 7-9c1.500-6 2-8.500 6-8.500z" fill="#4f4f4f"/>
<path d="M143 1004h17c-1 9-3 15-9 15h-12c1-3 2-7 2.500-10c.5-3 .5-5 1.500-5z" fill="#4d4d4d"/>
<path d="M145 1012h9.500M149.750 1007.500v9" stroke="#d6d6d6" stroke-width="2"/>
<g stroke="#ededed" stroke-width="1.200" fill="none">
<path d="M1412 1012.500h15M1412 1017.500h15M1412 1022.500h0M1414.500 1009v15M1419.500 1009v15M1424.500 1009v15M1412 1020.500h15" />
<path d="M1478.500 1009v15h15M1478.500 1019.500h4.500v4.500"/>
<circle cx="1509" cy="1017" r="6.300"/><path d="M1509 1017h8.500M1509 1017l8-8.500"/>
<path d="M1581 1023.500h16M1582 1023l13-11.500"/>
<rect x="1608.500" y="1011.500" width="12" height="12"/><rect x="1605.500" y="1008.500" width="4" height="4" fill="#5b8ec4"/>
<path d="M1795.500 1017.500h15M1803 1010v15" stroke-width="1.600"/>
<rect x="1822.500" y="1009.500" width="5.500" height="5.500" stroke="#d8d8d8"/><circle cx="1835" cy="1015.500" r="3" stroke="#d8d8d8"/><path d="M1825 1023.500l3.500-6l3.500 6z" stroke="#d8d8d8"/>
<rect x="1874.500" y="1011.500" width="15" height="11" stroke="#d8d8d8"/><path d="M1884 1014h3.500v3.500M1887 1014.500l-4 4M1880 1020h-3.500v-3.500M1877 1019.500l4-4" stroke="#d8d8d8"/>
<path d="M1898 1012h12M1898 1017.500h12M1898 1023h12" stroke-width="1.800"/>
</g>
<g fill="#ededed"><rect x="1438" y="1011" width="2.200" height="2.200"/><rect x="1443" y="1011" width="2.200" height="2.200"/><rect x="1448" y="1011" width="2.200" height="2.200"/><rect x="1438" y="1016" width="2.200" height="2.200"/><rect x="1443" y="1016" width="2.200" height="2.200"/><rect x="1448" y="1016" width="2.200" height="2.200"/><rect x="1438" y="1021" width="2.200" height="2.200"/><rect x="1443" y="1021" width="2.200" height="2.200"/><rect x="1448" y="1021" width="2.200" height="2.200"/>
<rect x="1586.500" y="1015" width="3" height="3"/>
<path d="M1460 1015h7l-3.500 4z"/><path d="M1526 1015h7l-3.500 4z"/><path d="M1564.500 1015h7l-3.500 4z"/><path d="M1628.500 1015h7l-3.500 4z"/><path d="M1737 1015h7l-3.500 4z"/><path d="M1779 1015h7l-3.500 4z"/>
</g>
<path d="M1541.500 1009.500l13 14" stroke="#e0555f" stroke-width="1.200"/><path d="M1548.500 1008.500v17" stroke="#4fd06a" stroke-width="1.200"/><rect x="1547" y="1015" width="3" height="3" fill="#4d4d4d" stroke="#eee" stroke-width=".8"/>
<!-- annotation scale icons -->
<g fill="#f4f4f4"><path d="M1655 1008.500l2.500 8.500l4.500 6.500l-5-3l-2 3.500l-2-3.500l-5 3l4.500-6.500z"/></g><circle cx="1660.500" cy="1011.500" r="2.300" fill="none" stroke="#f4f4f4" stroke-width="1.100"/>
<g fill="#d6d6d6"><path d="M1677 1008.500l2.500 8.500l4.500 6.500l-5-3l-2 3.500l-2-3.500l-5 3l4.500-6.500z"/><path d="M1684.500 1008l-3 4h2l-1.500 3.500l4.500-4.500h-2l2-3z"/><path d="M1702.500 1008.500l2.500 8.500l4.500 6.500l-5-3l-2 3.500l-2-3.500l-5 3l4.500-6.500z"/></g>
<!-- gear -->
<g transform="translate(1762.500 1017)"><circle r="5" fill="none" stroke="#dedede" stroke-width="3.200"/><g stroke="#dedede" stroke-width="2.600"><path d="M0 -8.500v3M0 8.500v-3M-8.500 0h3M8.500 0h-3M-6 -6l2.100 2.100M6 6l-2.100-2.100M-6 6l2.100-2.100M6 -6l-2.100 2.100"/></g></g>
<!-- sheet icon -->
<path d="M1848.500 1009.500h9l3.500 3.500v10h-12.500z" fill="#5aaeea"/><path d="M1857.500 1009.500v3.500h3.500z" fill="#e8f4fd"/><path d="M1848.500 1020h8v4.500h-8z" fill="#f6c76e"/><path d="M1853 1010v9M1849 1014.500h8" stroke="#fff" stroke-width="1"/><circle cx="1853" cy="1014.500" r="1.700" fill="#fff"/><path d="M1858 1021.500l2.500 2.500l4.500-5.500" stroke="#4fc27a" stroke-width="1.500" fill="none"/>
<!-- balloon tail over status bar -->
<path d="M1811 997L1841.800 1017L1829.500 997Z" fill="#ffffe1"/><path d="M1811.500 997.500L1841.500 1016.500L1829 997.500" fill="none" stroke="#0a0a0a" stroke-width="1.200"/>
</svg>
<div class="t" style="left:23.0px;top:1005.0px;color:#ffffff;font-size:12px;line-height:14px;height:14px;letter-spacing:0.07px;font-weight:bold;">Model</div>
<div class="t" style="left:81.5px;top:1005.0px;color:#c8c8c8;font-size:12px;line-height:14px;height:14px;letter-spacing:-0.31px;">Layout1</div>
</body></html>
